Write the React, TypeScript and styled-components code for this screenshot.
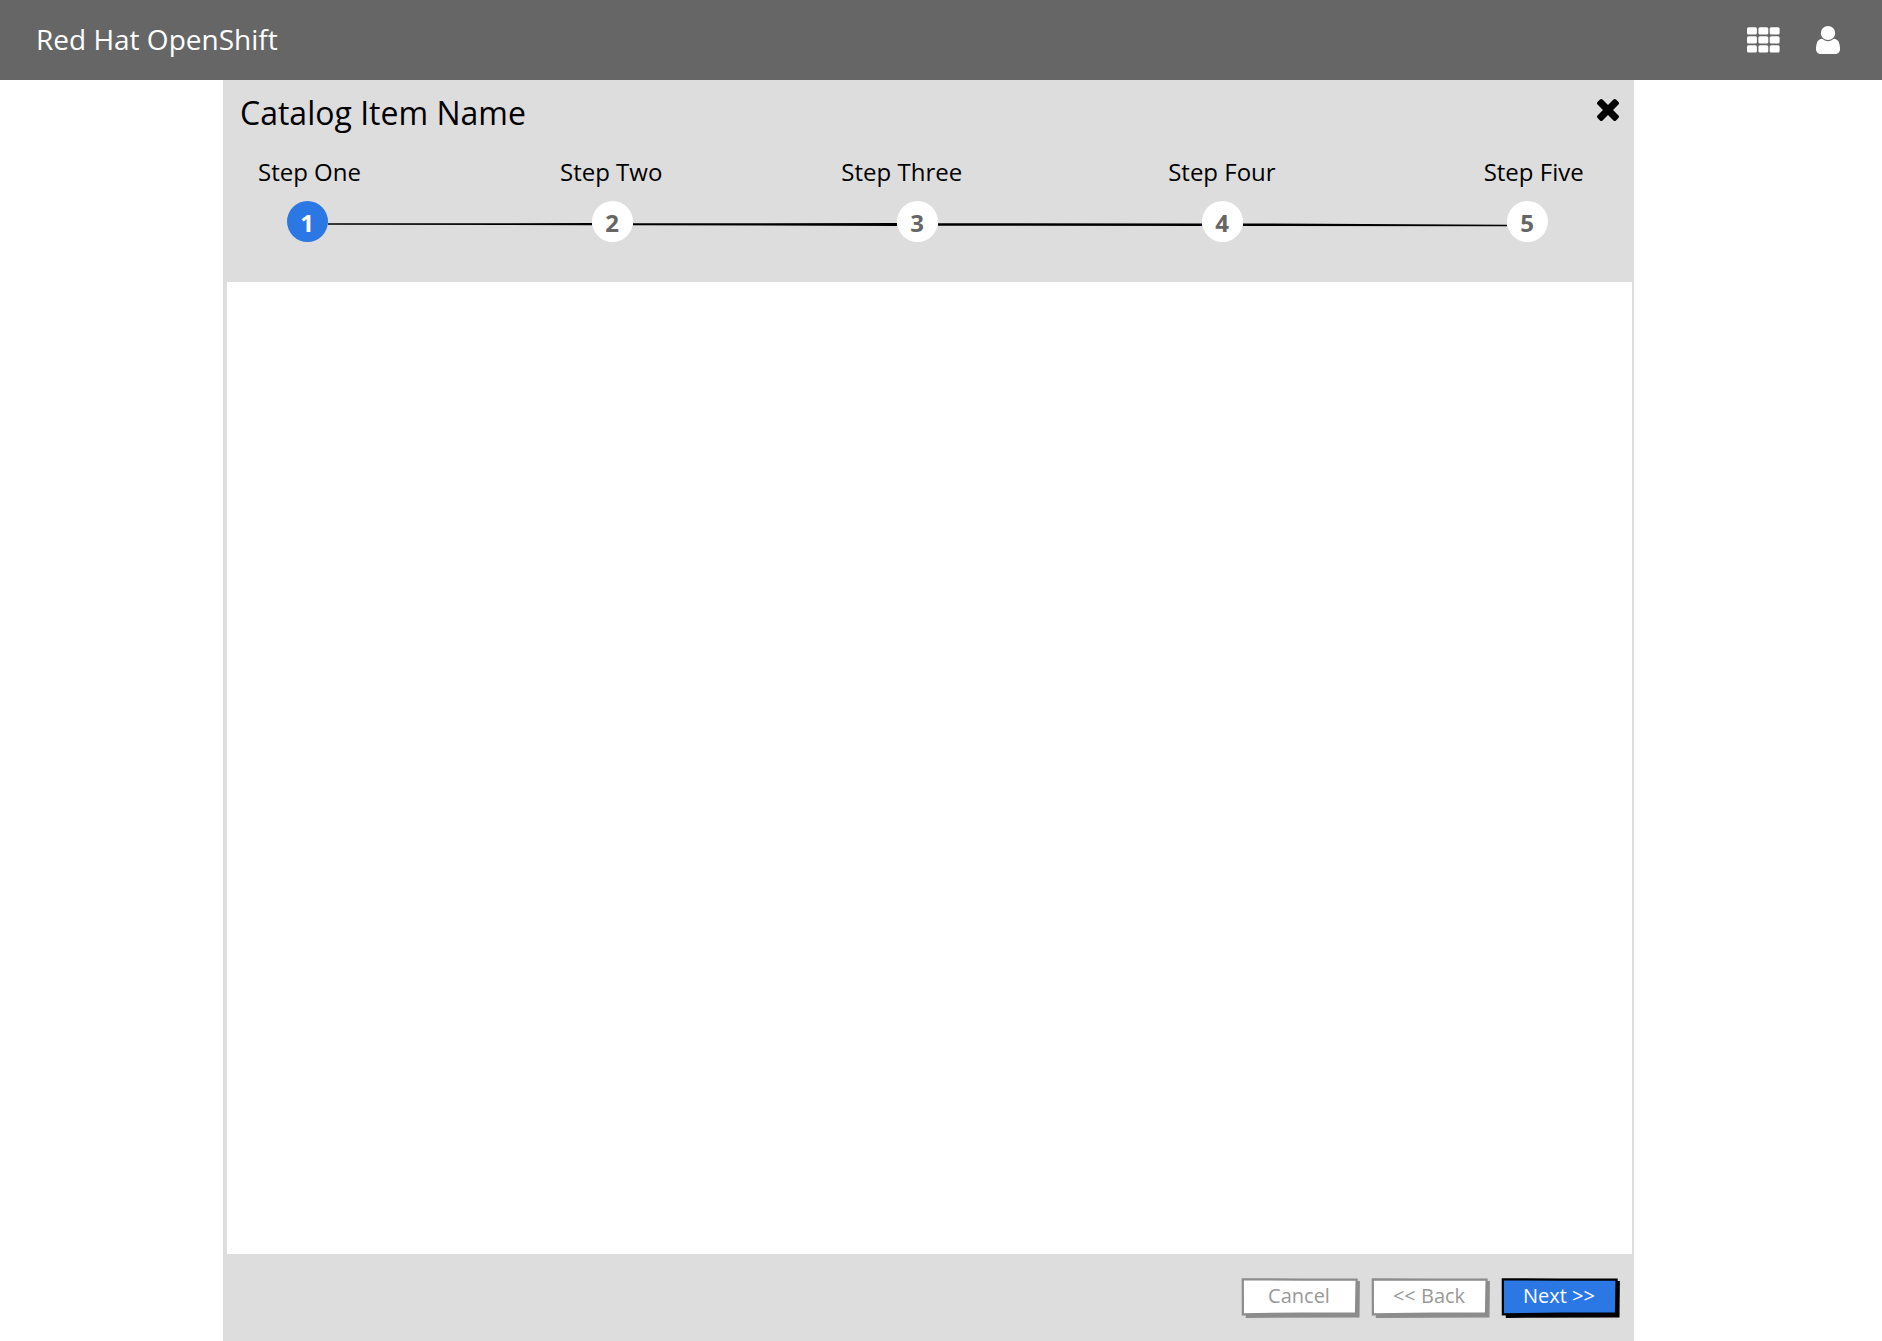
import React from "react";
import styled, { createGlobalStyle, css } from "styled-components";

const GlobalStyle = createGlobalStyle`
  * { box-sizing: border-box; }
  body {
    margin: 0;
    background: #fff;
    font-family: "Open Sans", "Noto Sans", sans-serif;
    color: #000;
  }
`;

const Page = styled.div`
  display: flex;
  flex-direction: column;
  height: 1341px;
  overflow: hidden;
`;

const Masthead = styled.header`
  display: flex;
  align-items: center;
  flex: 0 0 80px;
  padding: 0 42px 0 36px;
  background: #666;
  color: #fff;
`;

const Brand = styled.div`
  flex: 1;
  padding-bottom: 2px;
  font-size: 28px;
  line-height: 38px;
  white-space: nowrap;
`;

const MastheadIcons = styled.div`
  display: flex;
  align-items: center;
  gap: 36px;
  padding-bottom: 1px;

  svg { display: block; fill: #fff; }
`;

const Dialog = styled.section`
  display: flex;
  flex-direction: column;
  flex: 1;
  width: 1411px;
  margin-left: 223px;
  background: #ddd;
`;

const DialogHeader = styled.div`
  flex: 0 0 202px;
`;

const TitleRow = styled.div`
  display: flex;
  justify-content: space-between;
  padding: 11px 15px 0 17px;
`;

const Title = styled.h1`
  margin: 0;
  font-size: 32px;
  line-height: 44px;
  font-weight: 400;
`;

const CloseButton = styled.button`
  display: block;
  height: 22px;
  margin-top: 7.500px;
  padding: 0;
  border: 0;
  background: none;

  svg { display: block; }
`;

const Labels = styled.div`
  display: flex;
  padding-top: 20px;
  height: 53px;
`;

const StepLabel = styled.div<{ $gap: number }>`
  margin-left: ${(p) => p.$gap}px;
  font-size: 24px;
  line-height: 33px;
  white-space: nowrap;
`;

const Track = styled.div`
  display: flex;
  align-items: flex-start;
  padding: 13px 0 0 63.7px;
`;

const Step = styled.div<{ $active: boolean }>`
  display: flex;
  align-items: center;
  justify-content: center;
  flex: 0 0 41px;
  height: 41px;
  padding-top: 2px;
  border-radius: 50%;
  background: ${(p) => (p.$active ? "#2b78e4" : "#fff")};
  color: ${(p) => (p.$active ? "#fff" : "#666")};
  font-size: 24px;
  font-weight: 700;
`;

const Connector = styled.svg`
  flex: 0 0 264px;
  height: 41px;
`;

const Content = styled.main`
  flex: 0 0 972px;
  margin: 0 2px 0 4px;
  background: #fff;
`;

const Footer = styled.footer`
  display: flex;
  justify-content: flex-end;
  gap: 12px;
  padding: 24px 14px 0 0;
`;

const ActionButton = styled.button<{ $primary?: boolean }>`
  position: relative;
  width: 118px;
  height: 40px;
  padding: 0 4px 5px 0;
  border: 0;
  background: none;
  font-family: inherit;
  font-size: 20px;
  line-height: 27px;
  color: #999;
  ${(p) => p.$primary && css`color: #fff;`}
`;

const Sketch = styled.svg`
  position: absolute;
  inset: 0;
  width: 118px;
  height: 40px;
  overflow: visible;
`;

const Caption = styled.span`
  position: relative;
`;

const steps = [
  { label: "Step One", gap: 35 },
  { label: "Step Two", gap: 199 },
  { label: "Step Three", gap: 179 },
  { label: "Step Four", gap: 206 },
  { label: "Step Five", gap: 208 },
];

// The rule drops slightly from the first step to the last.
// Each entry: start y, end y, start thickness, end thickness.
const slopes = [
  [23.0, 23.2, 1.4, 2.2],
  [23.2, 23.5, 2.1, 2.8],
  [23.5, 23.700, 2.7, 2.4],
  [23.7, 24.500, 2.5, 1.3],
];

function GridIcon() {
  return (
    <svg width="33" height="26" viewBox="0 0 33 26">
      {[0.2, 9.2, 18.2].map((y) =>
        [0, 11.4, 22.7].map((x) => (
          <rect key={`${x}-${y}`} x={x} y={y} width="9.900" height="7.300" rx="1.600" />
        ))
      )}
    </svg>
  );
}

function UserIcon() {
  return (
    <svg width="24" height="28" viewBox="256 128 1280 1536" preserveAspectRatio="none">
      <path d="M1536 1399q0 109-62.500 187t-150.500 78h-854q-88 0-150.500-78t-62.500-187q0-85 8.500-160.500t31.500-152 58.500-131 94-89 134.500-34.500q131 128 313 128t313-128q76 0 134.500 34.500t94 89 58.500 131 31.500 152 8.500 160.500zm-256-887q0 159-112.500 271.500t-271.500 112.500-271.500-112.500-112.500-271.500 112.500-271.500 271.500-112.500 271.500 112.500 112.500 271.500z" />
    </svg>
  );
}

function CloseIcon() {
  return (
    <svg width="22" height="22" viewBox="110 366 1188 1188">
      <path d="M1298 1322q0 40-28 68l-136 136q-28 28-68 28t-68-28l-294-294-294 294q-28 28-68 28t-68-28l-136-136q-28-28-28-68t28-68l294-294-294-294q-28-28-28-68t28-68l136-136q28-28 68-28t68 28l294 294 294-294q28-28 68-28t68 28l136 136q28 28 28 68t-28 68l-294 294 294 294q28 28 28 68z" />
    </svg>
  );
}

function ButtonFrame({ primary = false }: { primary?: boolean }) {
  const ink = primary ? "#000" : "#8c8c8c";
  return (
    <Sketch viewBox="0 0 118 40" aria-hidden>
      <path d="M3.800 36L114 3L117.900 3L117.500 39.500L3.800 39.900Z" fill={ink} />
      <path
        d="M0.800 1.300L60 1.600L114.600 1.500L114 35.300L60 35.500L0.900 36.300Z"
        fill={primary ? "#2b78e4" : "#fff"}
        stroke={ink}
        strokeWidth="2.200"
      />
    </Sketch>
  );
}

export default function App() {
  return (
    <Page>
      <GlobalStyle />
      <Masthead>
        <Brand>Red Hat OpenShift</Brand>
        <MastheadIcons>
          <GridIcon />
          <UserIcon />
        </MastheadIcons>
      </Masthead>
      <Dialog>
        <DialogHeader>
          <TitleRow>
            <Title>Catalog Item Name</Title>
            <CloseButton aria-label="Close"><CloseIcon /></CloseButton>
          </TitleRow>
          <Labels>
            {steps.map((s) => (
              <StepLabel key={s.label} $gap={s.gap}>{s.label}</StepLabel>
            ))}
          </Labels>
          <Track>
            {steps.map((s, i) => (
              <React.Fragment key={s.label}>
                <Step $active={i === 0}>{i + 1}</Step>
                {i < slopes.length && (
                  <Connector viewBox="0 0 264 41">
                    <path
                      d={`M0 ${slopes[i][0] - slopes[i][2] / 2}L264 ${slopes[i][1] - slopes[i][3] / 2}V${slopes[i][1] + slopes[i][3] / 2}L0 ${slopes[i][0] + slopes[i][2] / 2}Z`}
                    />
                  </Connector>
                )}
              </React.Fragment>
            ))}
          </Track>
        </DialogHeader>
        <Content />
        <Footer>
          <ActionButton><ButtonFrame /><Caption>Cancel</Caption></ActionButton>
          <ActionButton><ButtonFrame /><Caption>&lt;&lt; Back</Caption></ActionButton>
          <ActionButton $primary><ButtonFrame primary /><Caption>Next &gt;&gt;</Caption></ActionButton>
        </Footer>
      </Dialog>
    </Page>
  );
}
